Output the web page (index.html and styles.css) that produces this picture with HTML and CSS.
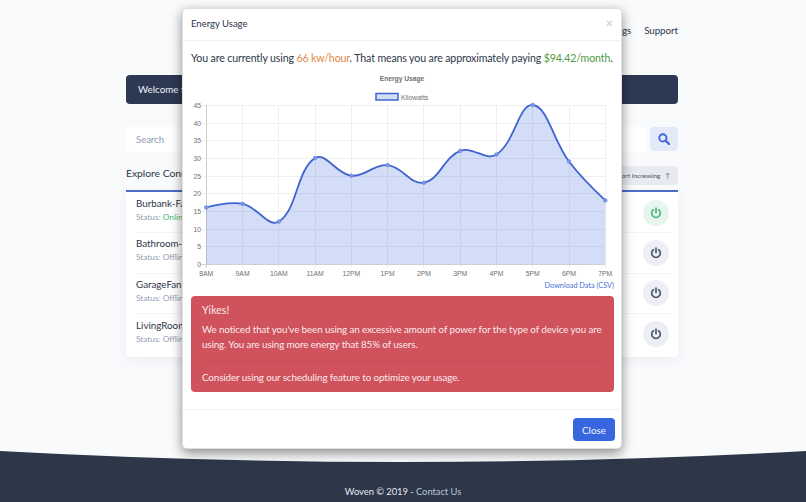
FILE: index.html
```html
<!DOCTYPE html>
<html lang="en">
<head>
<meta charset="utf-8">
<title>Woven</title>
<link rel="stylesheet" href="styles.css">
</head>
<body>
<div class="page">
  <nav class="nav"><a>Devices</a><a>Settings</a><a>Support</a></nav>
  <div class="welcome">Welcome to Woven</div>
  <div class="search">
    <div class="search-input">Search</div>
    <button class="search-btn" aria-label="Search">
      <svg viewBox="0 0 14 14" width="12" height="12"><circle cx="5.7" cy="5.7" r="4.2" fill="none" stroke="currentColor" stroke-width="2.2"/><path d="M8.8 8.8 12.8 12.8" stroke="currentColor" stroke-width="2.6" stroke-linecap="round"/></svg>
    </button>
  </div>
  <div class="explore">
    <h2>Explore Connected Devices</h2>
    <button class="sort">Sort Increasing <span class="arrow">↑</span></button>
  </div>
  <ul class="devices">
    <li class="device"><div class="info"><div class="name">Burbank-Fan</div><div class="status">Status: <span class="online">Online</span></div></div><button class="power on"><svg viewBox="0 0 14 14" width="12" height="12"><path d="M4 3.2a5 5 0 1 0 6 0M7 1.2v5.4" fill="none" stroke="currentColor" stroke-width="1.9" stroke-linecap="round"/></svg></button></li>
    <li class="device"><div class="info"><div class="name">Bathroom-Fan</div><div class="status">Status: Offline</div></div><button class="power"><svg viewBox="0 0 14 14" width="12" height="12"><path d="M4 3.2a5 5 0 1 0 6 0M7 1.2v5.4" fill="none" stroke="currentColor" stroke-width="1.9" stroke-linecap="round"/></svg></button></li>
    <li class="device"><div class="info"><div class="name">GarageFan</div><div class="status">Status: Offline</div></div><button class="power"><svg viewBox="0 0 14 14" width="12" height="12"><path d="M4 3.2a5 5 0 1 0 6 0M7 1.2v5.4" fill="none" stroke="currentColor" stroke-width="1.9" stroke-linecap="round"/></svg></button></li>
    <li class="device"><div class="info"><div class="name">LivingRoomFan</div><div class="status">Status: Offline</div></div><button class="power"><svg viewBox="0 0 14 14" width="12" height="12"><path d="M4 3.2a5 5 0 1 0 6 0M7 1.2v5.4" fill="none" stroke="currentColor" stroke-width="1.9" stroke-linecap="round"/></svg></button></li>
  </ul>
</div>
<footer class="footer">
  <svg class="curve" viewBox="0 0 806 12" width="806" height="12" preserveAspectRatio="none"><path d="M0 0Q403 22 806 0Z"/></svg>
  <p class="footer-text">Woven © 2019 - <a>Contact Us</a></p>
</footer>

<section class="modal">
  <header class="modal-head"><span>Energy Usage</span><span class="close-x">×</span></header>
  <div class="modal-body">
    <p class="lead">You are currently using <span class="orange">66 kw/hour</span>. That means you are approximately paying <span class="green">$94.42/month</span>.</p>
    <svg class="chart" viewBox="191 68 423 213" width="423" height="213">
      <text class="chart-title" x="402" y="80.5" text-anchor="middle">Energy Usage</text>
      <rect class="legend-box" x="376" y="93.5" width="22" height="6.5"/>
      <text class="tick" x="401" y="99.5">Kilowatts</text>
      <g class="grid">
        <path d="M201 105.5H605M201 123.5H605M201 140.5H605M201 158.5H605M201 176.5H605M201 193.5H605M201 211.5H605M201 229.5H605M201 246.5H605"/>
        <path d="M242.5 105V268M278.5 105V268M315.5 105V268M351.5 105V268M387.5 105V268M423.5 105V268M460.5 105V268M496.5 105V268M532.5 105V268M569.5 105V268M605.5 105V268"/>
      </g>
      <path class="axis" d="M206.5 105V268M201 264.5H605"/>
      <path class="area" d="M206.3 207.5C206.3 207.5 228.8 201.22 242.57 203.9C257.82 206.86 268.53 228.13 278.84 221.6C297.54 209.77 296.41 169.83 315.11 158C325.42 151.47 336.39 174.23 351.38 175.7C365.41 177.07 373.61 163.75 387.65 165.1C402.63 166.55 410.71 185.29 423.92 182.7C439.73 179.61 443.66 157.32 460.19 150.9C472.68 146.04 485.65 161.34 496.46 154.5C514.67 142.98 518.87 103.66 532.73 105C547.89 106.46 552.81 140.21 569 161.5C581.83 178.37 605.27 200.4 605.27 200.4V264H206.3Z"/>
      <path class="line" d="M206.3 207.5C206.3 207.5 228.8 201.22 242.57 203.9C257.82 206.86 268.53 228.13 278.84 221.6C297.54 209.77 296.41 169.83 315.11 158C325.42 151.47 336.39 174.23 351.38 175.7C365.41 177.07 373.61 163.75 387.65 165.1C402.63 166.55 410.71 185.29 423.92 182.7C439.73 179.61 443.66 157.32 460.19 150.9C472.68 146.04 485.65 161.34 496.46 154.5C514.67 142.98 518.87 103.66 532.73 105C547.89 106.46 552.81 140.21 569 161.5C581.83 178.37 605.27 200.4 605.27 200.4"/>
      <g class="points">
        <circle cx="206.3" cy="207.5" r="1.8"/><circle cx="242.57" cy="203.9" r="1.8"/><circle cx="278.84" cy="221.6" r="1.8"/><circle cx="315.11" cy="158" r="1.8"/><circle cx="351.38" cy="175.7" r="1.8"/><circle cx="387.65" cy="165.1" r="1.8"/><circle cx="423.92" cy="182.7" r="1.8"/><circle cx="460.19" cy="150.9" r="1.8"/><circle cx="496.46" cy="154.5" r="1.8"/><circle cx="532.73" cy="105" r="1.8"/><circle cx="569" cy="161.5" r="1.8"/><circle cx="605.27" cy="200.4" r="1.8"/>
      </g>
      <g class="tick" text-anchor="end">
        <text x="201" y="107.5">45</text><text x="201" y="125.5">40</text><text x="201" y="142.5">35</text><text x="201" y="160.5">30</text><text x="201" y="178.5">25</text><text x="201" y="195.5">20</text><text x="201" y="213.5">15</text><text x="201" y="231.5">10</text><text x="201" y="248.5">5</text><text x="201" y="266.5">0</text>
      </g>
      <g class="tick" text-anchor="middle">
        <text x="206.3" y="276">8AM</text><text x="242.6" y="276">9AM</text><text x="278.8" y="276">10AM</text><text x="315.1" y="276">11AM</text><text x="351.4" y="276">12PM</text><text x="387.6" y="276">1PM</text><text x="423.9" y="276">2PM</text><text x="460.2" y="276">3PM</text><text x="496.5" y="276">4PM</text><text x="532.7" y="276">5PM</text><text x="569" y="276">6PM</text><text x="605.3" y="276">7PM</text>
      </g>
    </svg>
    <div class="download"><a>Download Data (CSV)</a></div>
    <div class="alert">
      <h4>Yikes!</h4>
      <p>We noticed that you've been using an excessive amount of power for the type of device you are using. You are using more energy that 85% of users.</p>
      <hr>
      <p>Consider using our scheduling feature to optimize your usage.</p>
    </div>
  </div>
  <footer class="modal-foot"><button class="close-btn">Close</button></footer>
</section>
</body>
</html>
```
FILE: styles.css
```css
* { box-sizing: border-box; }
html, body { margin: 0; padding: 0; }
body {
  position: relative;
  width: 806px;
  height: 502px;
  overflow: hidden;
  background: #f8fafc;
  font-family: "Lato", "Liberation Sans", sans-serif;
  color: #2d3748;
  display: flex;
  flex-direction: column;
}
button { font: inherit; border: 0; cursor: pointer; }
.page { flex: 0 0 451px; padding: 0 128px 0 126px; width: 806px; }
.nav { height: 75px; padding-top: 23px; display: flex; justify-content: flex-end; gap: 13px; font-size: 9.8px; letter-spacing: -.06px; line-height: 14px; color: #2d3748; }
.welcome { height: 29px; background: #2d3852; color: #f1f3f8; border-radius: 4px; padding-left: 12px; font-size: 9.8px; line-height: 29px; }
.search { margin-top: 23px; height: 25px; display: flex; gap: 3px; }
.search-input { flex: 1; background: #fff; border-radius: 4px; color: #8f9bb3; font-size: 9.6px; letter-spacing: -.05px; line-height: 25px; padding-left: 10px; }
.search-btn { width: 28px; height: 24px; background: #e4e9fa; color: #3a66d8; border-radius: 4px; display: flex; align-items: center; justify-content: center; padding: 0; }
.explore { margin-top: 13px; height: 25px; display: flex; justify-content: space-between; align-items: flex-start; }
.explore h2 { margin: 0; font-size: 10.4px; letter-spacing: -.05px; line-height: 16px; font-weight: 400; color: #2d3748; }
.sort { margin-top: 1px; height: 19px; width: 100px; background: #e8eaef; border-radius: 4px; font-size: 6.5px; color: #4a5568; text-align: right; padding: 0 8px 0 0; }
.arrow { margin-left: 3px; }
.devices { list-style: none; margin: 0; padding: 1px 7px 0 10px; height: 167px; background: #fff; border-top: 2px solid #4a6dc5; border-radius: 0 0 4px 4px; box-shadow: 0 4px 12px rgba(60, 70, 100, .06); }
.device { height: 40.3px; display: flex; align-items: center; justify-content: space-between; border-bottom: 1px solid #f3f4f7; padding-right: 2px; }
.device:last-child { border-bottom: 0; }
.info { margin-bottom: 5px; }
.name { font-size: 9.8px; line-height: 14px; color: #2d3748; }
.status { font-size: 8.3px; line-height: 14px; color: #94a0b6; }
.online { color: #48bb78; }
.power { width: 26px; height: 26px; border-radius: 50%; background: #edeff4; color: #4a5568; padding: 0; display: flex; align-items: center; justify-content: center; }
.power.on { background: #e6f6ee; color: #48bb78; }
.footer { position: relative; flex: 1; background: #2d3748; color: #e2e8f0; text-align: center; }
.curve { display: block; fill: #f8fafc; }
.footer-text { margin: 22px 0 0; font-size: 9.4px; letter-spacing: -.05px; line-height: 14px; }
.footer-text a { color: #b5c5d5; }
.modal { position: absolute; left: 182px; top: 8px; width: 440px; height: 441px; background: #fff; border-radius: 5px; border: 1px solid rgba(0, 0, 0, .12); box-shadow: 0 4px 12px rgba(0, 0, 0, .45); display: flex; flex-direction: column; }
.modal-head { height: 32px; padding: 0 8px 3px; border-bottom: 1px solid #f1f2f4; display: flex; align-items: center; justify-content: space-between; font-size: 9.6px; letter-spacing: -.05px; color: #2d3748; }
.close-x { color: #c3c7ce; font-size: 13px; }
.modal-body { flex: 1; padding: 0 7px 0 8px; }
.lead { margin: 9px 0 0; font-size: 10.6px; letter-spacing: -.13px; line-height: 16px; white-space: nowrap; color: #2d3748; }
.orange { color: #dd8a46; }
.green { color: #4e9a45; }
.chart { display: block; margin-top: 2px; }
.chart-title { font: bold 6.7px "Liberation Sans", sans-serif; fill: #707070; }
.tick { font: 6.8px "Liberation Sans", sans-serif; fill: #707070; }
.legend-box { fill: #d3ddf7; stroke: #3f64cf; stroke-width: 1.5; }
.grid path { fill: none; stroke: #efefef; stroke-width: 1; }
.axis { fill: none; stroke: #cfcfcf; stroke-width: 1; }
.area { fill: rgba(58, 102, 224, .22); }
.line { fill: none; stroke: #3f64cf; stroke-width: 1.8; }
.points circle { fill: #7f98e4; stroke: #6a86dc; stroke-width: .8; }
.download { text-align: right; font-size: 7.3px; line-height: 10px; color: #4a72d6; }
.alert { margin-top: 5px; height: 96px; background: #cf525d; border-radius: 4px; color: #fbeaec; padding: 7px 11px; font-size: 9.8px; letter-spacing: -.1px; }
.alert h4 { margin: 0 0 5px; font-size: 10.6px; letter-spacing: 0; font-weight: 400; line-height: 14px; }
.alert p { margin: 0; line-height: 15px; }
.alert hr { margin: 9px 0 8px; border: 0; border-top: 1px solid #c64e59; }
.modal-foot { height: 39px; border-top: 1px solid #f1f2f4; display: flex; justify-content: flex-end; padding: 8px 6px 0 0; }
.close-btn { width: 42px; height: 23px; background: #3866df; color: #f1f4fd; border-radius: 4px; font-size: 9.8px; padding: 0; }
```
